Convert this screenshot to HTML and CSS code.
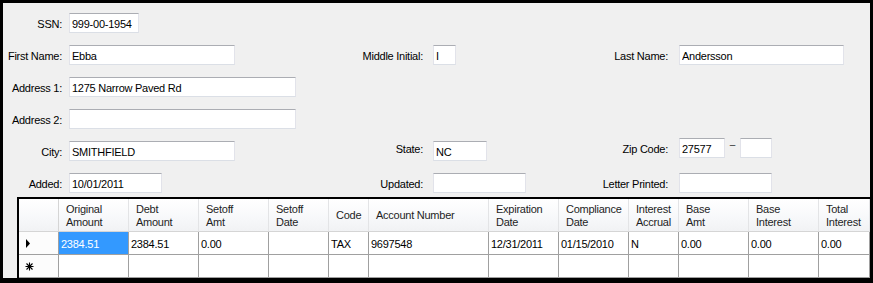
FILE: index.html
```html
<!DOCTYPE html>
<html lang="en">
<head>
    <meta charset="UTF-8">
    <title>Debtor Detail</title>
    <link rel="stylesheet" href="styles.css">
</head>
<body>
    <div class="window">
        <div class="form">
            <!-- row 1 -->
            <label class="lbl c1">SSN:</label>
            <input class="box c2 w70" type="text" value="999-00-1954">

            <!-- row 2 -->
            <label class="lbl c1">First Name:</label>
            <input class="box c2 w166" type="text" value="Ebba">
            <label class="lbl c3">Middle Initial:</label>
            <input class="box c4 w23" type="text" value="I">
            <label class="lbl c5">Last Name:</label>
            <input class="box c6 w165" type="text" value="Andersson">

            <!-- row 3 -->
            <label class="lbl c1">Address 1:</label>
            <input class="box c2 w227" type="text" value="1275 Narrow Paved Rd">

            <!-- row 4 -->
            <label class="lbl c1">Address 2:</label>
            <input class="box c2 w227" type="text" value="">

            <!-- row 5 -->
            <label class="lbl c1">City:</label>
            <input class="box c2 w166" type="text" value="SMITHFIELD">
            <label class="lbl c3 up">State:</label>
            <input class="box c4 w54 up" type="text" value="NC">
            <label class="lbl c5 up">Zip Code:</label>
            <div class="zip c6 up">
                <input class="box w46" type="text" value="27577">
                <span class="dash">&ndash;</span>
                <input class="box w32" type="text" value="">
            </div>

            <!-- row 6 -->
            <label class="lbl c1">Added:</label>
            <input class="box c2 w93" type="text" value="10/01/2011">
            <label class="lbl c3">Updated:</label>
            <input class="box c4 w93" type="text" value="">
            <label class="lbl c5">Letter Printed:</label>
            <input class="box c6 w93" type="text" value="">
        </div>

        <div class="grid">
            <div class="hd corner"></div>
            <div class="hd">Original<br>Amount</div>
            <div class="hd">Debt<br>Amount</div>
            <div class="hd">Setoff<br>Amt</div>
            <div class="hd">Setoff<br>Date</div>
            <div class="hd">Code</div>
            <div class="hd">Account Number</div>
            <div class="hd">Expiration<br>Date</div>
            <div class="hd">Compliance<br>Date</div>
            <div class="hd">Interest<br>Accrual</div>
            <div class="hd">Base<br>Amt</div>
            <div class="hd">Base<br>Interest</div>
            <div class="hd">Total<br>Interest</div>

            <div class="rh">
                <svg width="6" height="9" viewBox="0 0 6 9"><path d="M1 0 L5 4.5 L1 9 Z" fill="#000"/></svg>
            </div>
            <div class="td sel">2384.51</div>
            <div class="td">2384.51</div>
            <div class="td">0.00</div>
            <div class="td"></div>
            <div class="td">TAX</div>
            <div class="td">9697548</div>
            <div class="td">12/31/2011</div>
            <div class="td">01/15/2010</div>
            <div class="td">N</div>
            <div class="td">0.00</div>
            <div class="td">0.00</div>
            <div class="td">0.00</div>

            <div class="rh">
                <svg width="9" height="9" viewBox="0 0 9 9">
                    <path d="M4.5 0.5 V8.5 M0.5 4.5 H8.5 M1.5 1.5 L7.5 7.5 M7.5 1.5 L1.5 7.5" stroke="#000" stroke-width="1.1"/>
                </svg>
            </div>
            <div class="td"></div>
            <div class="td"></div>
            <div class="td"></div>
            <div class="td"></div>
            <div class="td"></div>
            <div class="td"></div>
            <div class="td"></div>
            <div class="td"></div>
            <div class="td"></div>
            <div class="td"></div>
            <div class="td"></div>
            <div class="td"></div>
        </div>
    </div>
</body>
</html>
```

FILE: styles.css
```css
body {
    margin: 0;
    padding: 3px 3px 5px 3px;
    background-color: #000;
    font-family: "Liberation Sans", Arial, sans-serif;
    font-size: 11px;
    letter-spacing: -0.25px;
    color: #000;
}

.window {
    background-color: #f0f0f0;
    height: 275px;
    overflow: hidden;
}

/* form fields */
.form {
    display: grid;
    grid-template-columns: 59px 268px 93px 157px 88px 1fr;
    grid-auto-rows: 20px;
    row-gap: 12px;
    padding-top: 10px;
    height: 184px;
}

.c1 { grid-column: 1; }
.c2 { grid-column: 2; margin-left: 7px; }
.c3 { grid-column: 3; }
.c4 { grid-column: 4; margin-left: 10px; }
.c5 { grid-column: 5; }
.c6 { grid-column: 6; margin-left: 11px; }

.lbl {
    text-align: right;
    align-self: center;
    white-space: nowrap;
    padding-top: 1px;
}

.up {
    margin-top: -3px;
    margin-bottom: 3px;
}

.box {
    box-sizing: border-box;
    height: 20px;
    margin-top: 0;
    margin-bottom: 0;
    padding: 1px 2px 0 2px;
    border: 1px solid #dbdfe6;
    border-top-color: #abadb3;
    border-left-color: #e2e3ea;
    border-right-color: #e2e3ea;
    border-radius: 0;
    background-color: #fff;
    font-family: "Liberation Sans", Arial, sans-serif;
    font-size: 11px;
    letter-spacing: -0.25px;
    color: #000;
    outline: none;
}

.w23 { width: 23px; }
.w32 { width: 32px; }
.w46 { width: 46px; }
.w54 { width: 54px; }
.w70 { width: 70px; }
.w93 { width: 93px; }
.w165 { width: 165px; }
.w166 { width: 166px; }
.w227 { width: 227px; }

.zip {
    display: flex;
    align-items: flex-start;
}

.zip .dash {
    width: 15px;
    text-align: center;
    line-height: 14px;
    font-size: 10px;
    color: #333;
}

/* data grid */
.grid {
    margin-left: 14px;
    border-left: 2px solid #000;
    border-top: 2px solid #000;
    display: grid;
    grid-template-columns: 40px 70px 70px 70px 60px 40px 120px 70px 70px 50px 70px 70px 1fr;
    grid-template-rows: 33px 23px 23px;
    background-color: #fff;
    border-bottom: 1px solid #a0a0a0;
}

.hd {
    box-sizing: border-box;
    display: flex;
    align-items: center;
    padding: 1px 0 0 7px;
    line-height: 13px;
    background: linear-gradient(#ffffff, #f7f8fa 60%, #f1f2f4);
    border-right: 1px solid #e3e4e6;
    border-bottom: 1px solid #d5d5d5;
    color: #1e1e1e;
    white-space: nowrap;
    overflow: hidden;
}

.hd.corner {
    border-right-color: #d5d5d5;
}

.rh {
    box-sizing: border-box;
    display: flex;
    align-items: center;
    padding-left: 6px;
    background-color: #fcfcfc;
    border-right: 1px solid #a0a0a0;
    border-bottom: 1px solid #a0a0a0;
}

.td {
    box-sizing: border-box;
    display: flex;
    align-items: center;
    padding: 1px 0 0 2px;
    border-right: 1px solid #a0a0a0;
    border-bottom: 1px solid #a0a0a0;
    white-space: nowrap;
    overflow: hidden;
}

.td.sel {
    background-color: #3399ff;
    color: #fff;
}
```
